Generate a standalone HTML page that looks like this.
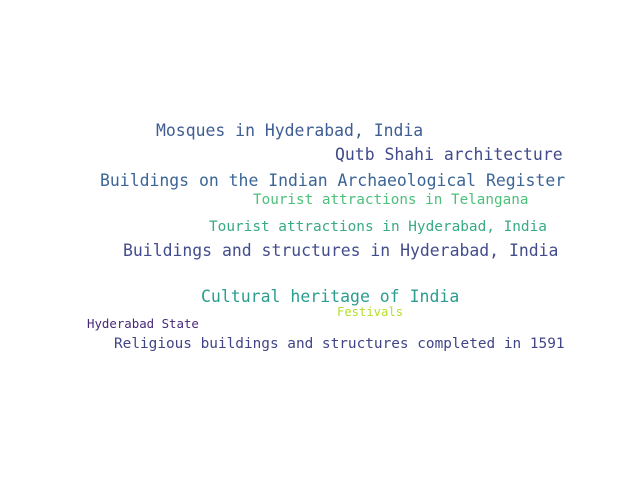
<!DOCTYPE html>
<html><head><meta charset="utf-8"><style>
html,body{margin:0;padding:0;background:#fff;width:640px;height:480px;overflow:hidden}
div{position:absolute;white-space:pre;font-family:"DejaVu Sans Mono","Liberation Mono",monospace;line-height:1}
</style></head><body>
<div style="left:156px;top:123px;font-size:16.45px;color:#3f5d92">Mosques in Hyderabad, India</div>
<div style="left:335px;top:147px;font-size:16.45px;color:#414a8a">Qutb Shahi architecture</div>
<div style="left:100px;top:173px;font-size:16.45px;color:#3b6596">Buildings on the Indian Archaeological Register</div>
<div style="left:253px;top:193px;font-size:14.3px;color:#4cc07a">Tourist attractions in Telangana</div>
<div style="left:209px;top:220px;font-size:14.4px;color:#38aa84">Tourist attractions in Hyderabad, India</div>
<div style="left:123px;top:243px;font-size:16.45px;color:#434d8c">Buildings and structures in Hyderabad, India</div>
<div style="left:201px;top:289px;font-size:16.5px;color:#2a9d8f">Cultural heritage of India</div>
<div style="left:337px;top:306px;font-size:12.2px;color:#b5de2b">Festivals</div>
<div style="left:87px;top:318px;font-size:12.4px;color:#482878">Hyderabad State</div>
<div style="left:114px;top:337px;font-size:14.4px;color:#414487">Religious buildings and structures completed in 1591</div>
</body></html>
